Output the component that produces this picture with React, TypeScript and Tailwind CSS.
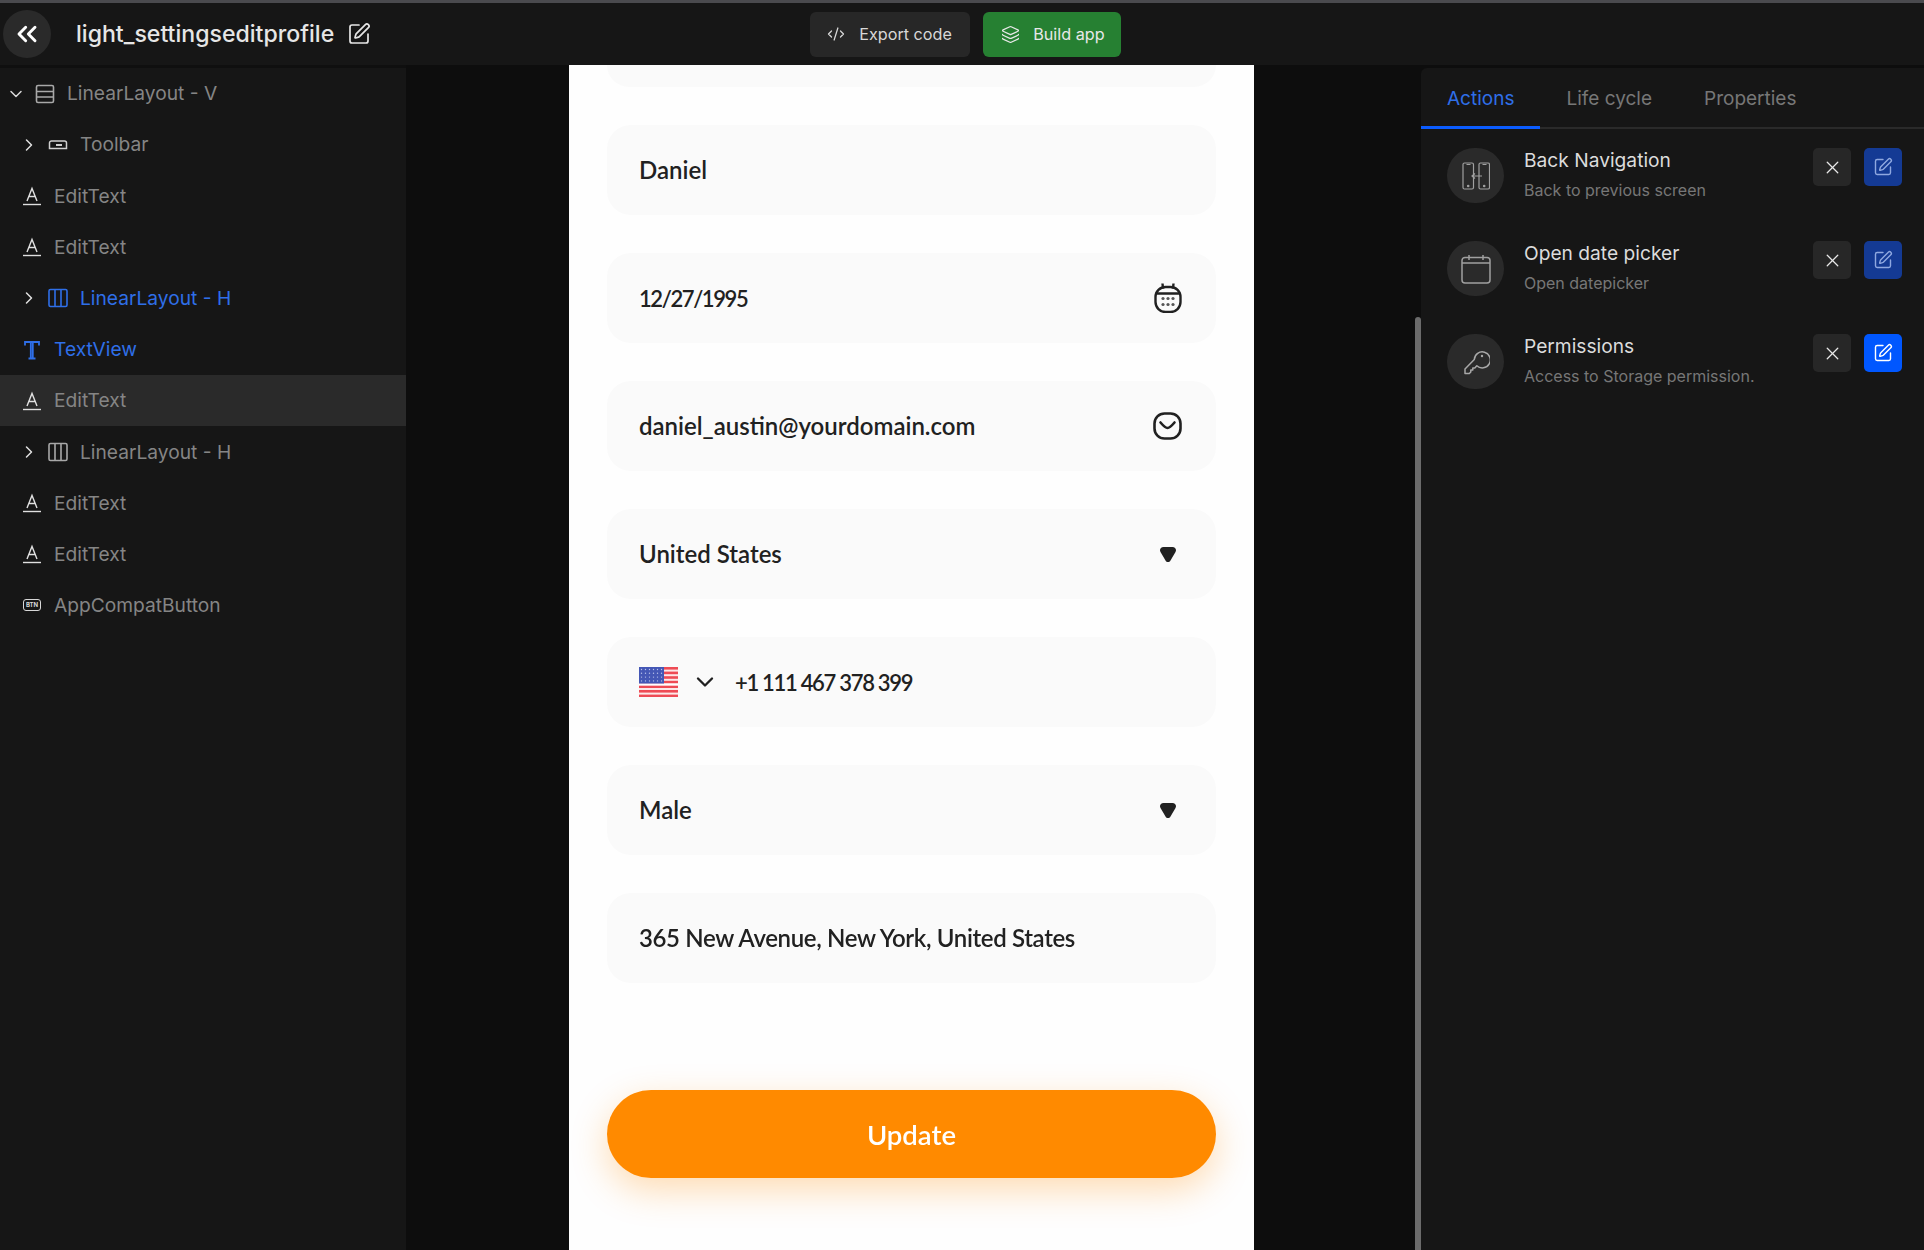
import React from 'react';
import { ChevronDown, ChevronRight, ChevronsLeft, CodeXml, Layers, SquarePen, X } from 'lucide-react';

const uiFont = "font-['Inter','Liberation_Sans',sans-serif]";

function RowsIcon() {
  return (
    <svg width="20" height="20" viewBox="0 0 20 20" fill="none" stroke="#a8a8a8" strokeWidth="1.6">
      <rect x="1.5" y="1.5" width="17" height="17" rx="1.5" />
      <path d="M1.5 7.5h17M1.5 13h17" />
    </svg>
  );
}

function ColumnsIcon({ color }: { color: string }) {
  return (
    <svg width="20" height="20" viewBox="0 0 20 20" fill="none" stroke={color} strokeWidth="1.6">
      <rect x="1" y="1.5" width="18" height="17" rx="1.5" />
      <path d="M7 1.5v17M13 1.5v17" />
    </svg>
  );
}

function ToolbarIcon() {
  return (
    <svg width="20" height="20" viewBox="0 0 20 20" fill="none" stroke="#d0d0d0" strokeWidth="1.5">
      <path d="M3.500 6h13a2 2 0 0 1 2 2v5.500h-17V8a2 2 0 0 1 2-2Z" />
      <path d="M8 10h6" strokeWidth="2" />
    </svg>
  );
}

function EditTextIcon() {
  return (
    <svg width="20" height="20" viewBox="0 0 20 20" fill="none" stroke="#e0e0e0" strokeWidth="1.4">
      <path d="M5 15 10 2.500 15 15M6.800 10.500h6.400" />
      <path d="M1 18.500h18" />
    </svg>
  );
}

function TextViewIcon() {
  return (
    <svg width="20" height="20" viewBox="0 0 20 20" fill="none" stroke="#2f6fe8" strokeWidth="1.8">
      <path d="M3 5.500V2h14v3.500M10.800 2v16.500M8.800 2v16.500M6.500 18.500h7" />
    </svg>
  );
}

function BtnIcon() {
  return (
    <span className="flex h-[12px] w-[18px] items-center justify-center rounded-[3px] border-[1.5px] border-[#d8d8d8] text-[6px] leading-none font-bold text-[#d8d8d8]">
      BTN
    </span>
  );
}

function TreeRow({
  label,
  level,
  icon,
  blue,
  selected,
  open,
}: {
  label: string;
  level: 'root' | 'branch' | 'leaf';
  icon: React.ReactNode;
  blue?: boolean;
  selected?: boolean;
  open?: boolean;
}) {
  return (
    <div className={`flex h-[51.2px] items-center ${selected ? 'bg-[#2a2a2a]' : ''} ${level === 'root' ? 'pl-[6px]' : level === 'branch' ? 'pl-[19px]' : 'pl-[22px]'}`}>
      {level !== 'leaf' &&
        (open ? (
          <ChevronDown size={20} strokeWidth={1.8} className="mr-[9px] text-[#d8d8d8]" />
        ) : (
          <ChevronRight size={20} strokeWidth={1.8} className="mr-[9px] text-[#e0e0e0]" />
        ))}
      <span className="flex w-[20px] items-center justify-center">{icon}</span>
      <span className={`ml-[12px] text-[19.2px] ${blue ? 'text-[#2f6fe8]' : 'text-[#858585]'}`}>{label}</span>
    </div>
  );
}

function Field({ children, clipped }: { children?: React.ReactNode; clipped?: boolean }) {
  return (
    <div className={`flex items-center justify-between bg-[#fafafa] pr-[34px] pl-[32px] text-[24px] font-semibold text-[#212121] ${clipped ? 'h-[22px] rounded-b-[24px]' : 'h-[90px] rounded-[24px]'}`}>
      {children}
    </div>
  );
}

function CalendarGlyph() {
  return (
    <svg width="28" height="30" viewBox="0 0 28 30" fill="none" stroke="#212121" strokeWidth="2.4">
      <rect x="1.500" y="4" width="25" height="25" rx="10" />
      <path d="M8.500 .5l.5 5M19.500 .5 19 5.500M2 10.500h24" />
      <g fill="#555555" stroke="none">
        <circle cx="9" cy="15.500" r="1.600" /><circle cx="14" cy="15.500" r="1.600" /><circle cx="19" cy="15.500" r="1.600" />
        <circle cx="9" cy="21.500" r="1.600" /><circle cx="14" cy="21.500" r="1.600" /><circle cx="19" cy="21.500" r="1.600" />
      </g>
    </svg>
  );
}

function MailGlyph() {
  return (
    <svg width="29" height="28" viewBox="0 0 29 28" fill="none" stroke="#212121" strokeWidth="2.600">
      <rect x="1.500" y="1.500" width="26" height="25" rx="10" />
      <path d="M7.500 10.500c3 3.500 5 5.500 7 5.500s4-2 7-5.500" strokeLinecap="round" />
    </svg>
  );
}

function DropGlyph() {
  return (
    <svg width="16" height="15" viewBox="0 0 16 15" fill="#212121" className="mr-[6px]">
      <path d="M3.500 0h9C15.500 0 16.800 2.800 15.500 5l-5 8.500c-1.100 2-3.900 2-5 0L.5 5C-.8 2.800.5 0 3.500 0Z" />
    </svg>
  );
}

function UsFlag() {
  const stripes = [0, 1, 2, 3, 4, 5, 6];
  const stars = [0, 1, 2, 3, 4, 5];
  return (
    <svg width="39" height="30" viewBox="0 0 39 30">
      <rect width="39" height="30" fill="#fde8e8" />
      {stripes.map((i) => (
        <rect key={i} y={i * 4.600} width="39" height="2.600" fill="#ee4b55" />
      ))}
      <rect y="16.500" width="39" height="2" fill="#ffffff" />
      <rect width="25" height="16.500" fill="#4457b5" />
      {stars.map((c) => [0, 1, 2, 3].map((r) => (
        <circle key={`${c}-${r}`} cx={2.500 + c * 4} cy={2.500 + r * 3.800} r="0.700" fill="#b9c2ea" />
      )))}
    </svg>
  );
}

function PhonesIcon() {
  return (
    <svg width="28" height="28" viewBox="0 0 28 28" fill="none" stroke="#a0a0a0" strokeWidth="1.200">
      <rect x="1" y="1" width="10.500" height="26" rx="1.500" />
      <rect x="17" y="1" width="10.500" height="26" rx="1.500" />
      <path d="M20 14H10M13 11.500 10 14l3 2.500M4.500 2.500h4M20.500 2.500h4" />
      <circle cx="6.200" cy="24" r=".7" fill="#a0a0a0" />
      <circle cx="22.200" cy="24" r=".7" fill="#a0a0a0" />
    </svg>
  );
}

function CalendarIcon() {
  return (
    <svg width="30" height="30" viewBox="0 0 30 30" fill="none" stroke="#a0a0a0" strokeWidth="1.500">
      <rect x="1" y="3.500" width="28" height="25.500" rx="3" />
      <path d="M1 9h28M8 1v5M22 1v5" />
    </svg>
  );
}

function KeyIcon() {
  return (
    <svg width="28" height="28" viewBox="0 0 28 28" fill="none" stroke="#a8a8a8" strokeWidth="1.500" strokeLinejoin="round">
      <path d="M12.300 11.500 3 21v4.500h4.300l1.500-1.500v-2h2v-2h2l2-2.300a8 8 0 1 0-2.500-6.200Z" />
      <circle cx="20" cy="8" r="1.200" fill="#a8a8a8" stroke="none" />
    </svg>
  );
}

function ActionRow({
  icon,
  title,
  sub,
  editClass,
}: {
  icon: React.ReactNode;
  title: string;
  sub: string;
  editClass: string;
}) {
  return (
    <div className="flex h-[55px] items-start">
      <div className="flex h-[55px] w-[57px] items-center justify-center rounded-full bg-[#2a2a2a]">{icon}</div>
      <div className="ml-[20px] flex-1">
        <div className="text-[19.2px] leading-[24px] text-[#dcdcdc]">{title}</div>
        <div className="mt-[8px] text-[16px] leading-[20px] text-[#777777]">{sub}</div>
      </div>
      <button className="flex h-[38px] w-[38px] items-center justify-center rounded-[5px] bg-[#272727] text-[#e8e8e8]">
        <X size={21} strokeWidth={1.5} />
      </button>
      <button className={`ml-[13px] flex h-[38px] w-[38px] items-center justify-center rounded-[5px] ${editClass}`}>
        <SquarePen size={20} strokeWidth={1.7} />
      </button>
    </div>
  );
}

export default function App() {
  return (
    <div className={`flex h-[1250px] w-[1924px] flex-col overflow-hidden bg-[#0d0d0d] ${uiFont}`}>
      <header className="flex h-[65px] shrink-0 items-center border-t-[3px] border-[#4a4a4e] bg-[#161616]">
        <div className="ml-[3px] flex h-[48px] w-[48px] items-center justify-center rounded-full bg-[#2a2a2a] text-white">
          <ChevronsLeft size={32} strokeWidth={2.2} />
        </div>
        <div className="ml-[25px] text-[23.1px] font-medium text-[#e6e6e6]">light_settingseditprofile</div>
        <SquarePen size={24} strokeWidth={1.7} className="ml-[13px] text-[#e6e6e6]" />
        <button className="ml-[439px] flex h-[45px] w-[160px] items-center rounded-[6px] bg-[#272727] pl-[17px] text-[16.2px] text-[#d8d8d8]">
          <CodeXml size={18} strokeWidth={1.7} />
          <span className="ml-[14px]">Export code</span>
        </button>
        <button className="ml-[13px] flex h-[45px] w-[138px] items-center rounded-[6px] bg-[#268032] pl-[18px] text-[16.2px] text-[#e8e8e8]">
          <Layers size={19} strokeWidth={1.6} />
          <span className="ml-[13px]">Build app</span>
        </button>
      </header>

      <div className="flex min-h-0 flex-1">
        <aside className="w-[406px] shrink-0 border-t-[3px] border-[#0f0f0f] bg-[#161616]">
          <TreeRow level="root" open label="LinearLayout - V" icon={<RowsIcon />} />
          <TreeRow level="branch" label="Toolbar" icon={<ToolbarIcon />} />
          <TreeRow level="leaf" label="EditText" icon={<EditTextIcon />} />
          <TreeRow level="leaf" label="EditText" icon={<EditTextIcon />} />
          <TreeRow level="branch" blue label="LinearLayout - H" icon={<ColumnsIcon color="#2f6fe8" />} />
          <TreeRow level="leaf" blue label="TextView" icon={<TextViewIcon />} />
          <TreeRow level="leaf" selected label="EditText" icon={<EditTextIcon />} />
          <TreeRow level="branch" label="LinearLayout - H" icon={<ColumnsIcon color="#a8a8a8" />} />
          <TreeRow level="leaf" label="EditText" icon={<EditTextIcon />} />
          <TreeRow level="leaf" label="EditText" icon={<EditTextIcon />} />
          <TreeRow level="leaf" label="AppCompatButton" icon={<BtnIcon />} />
        </aside>

        <main className="relative flex flex-1 justify-center pr-[4px]">
          <div className="flex h-full w-[685px] flex-col gap-[38px] bg-[#fefefe] px-[38px] font-['Lato','Liberation_Sans',sans-serif] blur-[0.5px]">
            <Field clipped />
            <Field>Daniel</Field>
            <Field>
              <span className="text-[22px] tracking-[-1.4px]">12/27/1995</span>
              <CalendarGlyph />
            </Field>
            <Field>
              <span>daniel_austin@yourdomain.com</span>
              <MailGlyph />
            </Field>
            <Field>
              <span>United States</span>
              <DropGlyph />
            </Field>
            <Field>
              <div className="flex items-center">
                <UsFlag />
                <ChevronDown size={28} strokeWidth={2} className="ml-[13px] text-[#212121]" />
                <span className="ml-[16px] text-[22px] tracking-[-1.3px]">+1 111 467 378 399</span>
              </div>
            </Field>
            <Field>
              <span>Male</span>
              <DropGlyph />
            </Field>
            <Field>
              <span className="tracking-[-0.36px]">365 New Avenue, New York, United States</span>
            </Field>
            <button className="mt-[69px] h-[88px] shrink-0 rounded-full bg-[#ff8a00] pt-[2px] text-[27.5px] font-semibold text-white shadow-[0_12px_36px_rgba(255,138,0,0.3)]">
              Update
            </button>
          </div>
          {/* scrollbar thumb of the right panel */}
          <div className="absolute top-[252px] right-0 bottom-0 w-[6px] rounded-t-full bg-[#6b6b6b]" />
        </main>

        <section className="mt-[3px] w-[503px] shrink-0 rounded-tl-[6px] bg-[#161616]">
          <div className="flex h-[61px] border-b-[2px] border-[#2a2a2a] text-[19px] text-[#777777]">
            <div className="-mb-[2px] flex items-center border-b-[3px] border-[#0b5cff] px-[26px] pt-[4px] text-[#2f6fe8]">Actions</div>
            <div className="flex items-center px-[26px] pt-[4px]">Life cycle</div>
            <div className="flex items-center px-[26px] pt-[4px]">Properties</div>
          </div>
          <div className="flex flex-col gap-[38px] pt-[19px] pr-[22px] pl-[26px]">
            <ActionRow icon={<PhonesIcon />} title="Back Navigation" sub="Back to previous screen" editClass="bg-[#143a94] text-[#8fa8e0]" />
            <ActionRow icon={<CalendarIcon />} title="Open date picker" sub="Open datepicker" editClass="bg-[#143a94] text-[#8fa8e0]" />
            <ActionRow icon={<KeyIcon />} title="Permissions" sub="Access to Storage permission." editClass="bg-[#0057ff] text-white" />
          </div>
        </section>
      </div>
    </div>
  );
}
